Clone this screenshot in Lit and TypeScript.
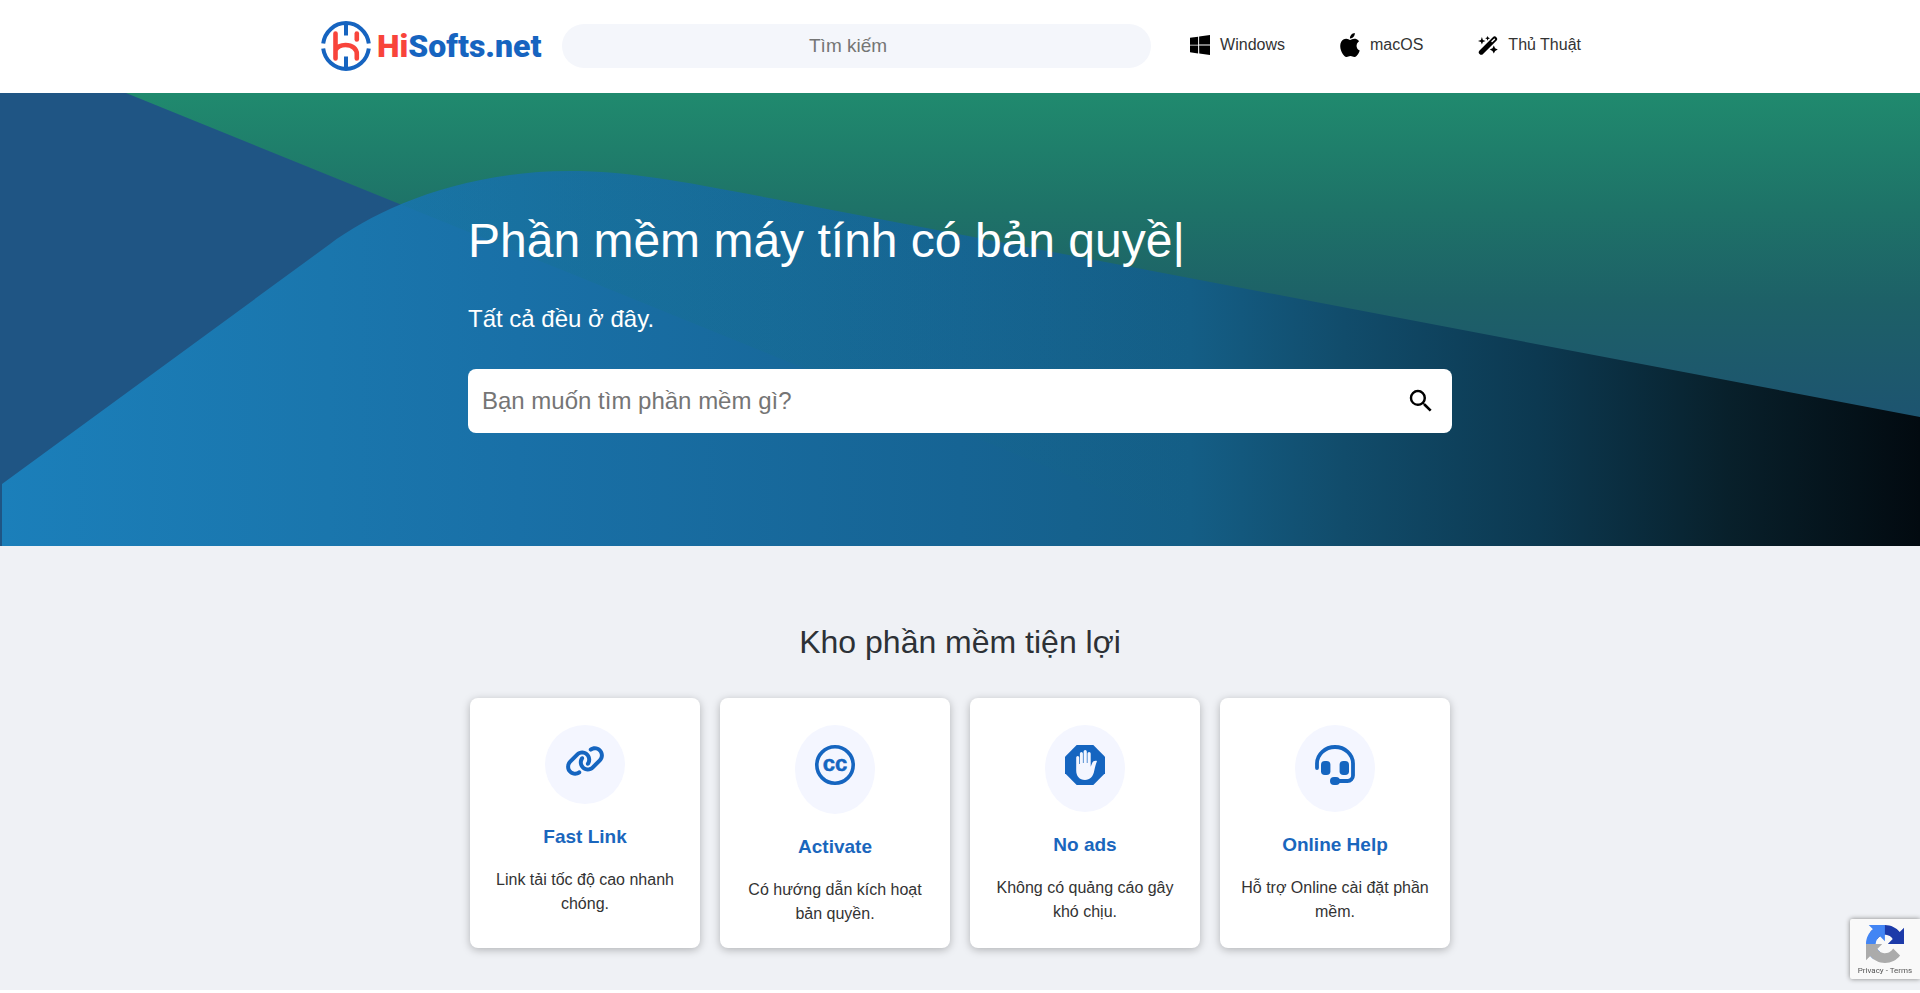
import { LitElement, html, css, svg } from "lit";
import { customElement, property } from "lit/decorators.js";

const windowsIcon = html`<svg viewBox="0 0 24 24" aria-hidden="true">
  <path d="M0 3.449 9.75 2.1v9.451H0m10.949-9.602L24 0v11.4H10.949M0 12.6h9.75v9.451L0 20.699M10.949 12.6H24V24l-12.9-1.801" />
</svg>`;

const appleIcon = html`<svg class="tall" viewBox="2 0 20 24" aria-hidden="true">
  <path d="M12.152 6.896c-.948 0-2.415-1.078-3.96-1.04-2.04.027-3.91 1.183-4.961 3.014-2.117 3.675-.546 9.103 1.519 12.09 1.013 1.454 2.208 3.09 3.792 3.039 1.52-.065 2.09-.987 3.935-.987 1.831 0 2.35.987 3.96.948 1.637-.026 2.676-1.48 3.676-2.948 1.156-1.688 1.636-3.325 1.662-3.415-.039-.013-3.182-1.221-3.22-4.857-.026-3.04 2.48-4.494 2.597-4.559-1.429-2.09-3.623-2.324-4.39-2.376-2-.156-3.675 1.09-4.61 1.09zM15.53 3.83c.843-1.012 1.4-2.427 1.245-3.83-1.207.052-2.662.805-3.532 1.818-.78.896-1.454 2.338-1.273 3.714 1.338.104 2.715-.688 3.559-1.701" />
</svg>`;

const wandIcon = html`<svg viewBox="0 0 20 20" aria-hidden="true">
  <path d="M3.3 17.2 16.6 3.9" stroke="#000" stroke-width="5" stroke-linecap="round" />
  <path d="M14 6.6 16.4 4.2" stroke="#fff" stroke-width="1.4" stroke-linecap="round" />
  <path d="M3.9 2 4.9 4.9 7.6 5.9 4.9 6.9 3.9 9.6 2.9 6.9 0 5.9 2.9 4.9zM9.6.9l.7 1.7 1.7.7-1.7.7-.7 1.7-.7-1.7-1.7-.7 1.7-.7zM15.8 10.6l1.3 2.7 2.7 1.3-2.7 1.3-1.3 2.7-1.3-2.7-2.7-1.3 2.7-1.3z" />
</svg>`;

const linkIcon = svg`<path transform="scale(0.0625)" d="M579.8 267.7c56.5-56.5 56.5-148 0-204.5c-50-50-128.8-56.5-186.3-15.4l-1.6 1.1c-14.4 10.3-17.7 30.3-7.4 44.6s30.3 17.7 44.6 7.4l1.6-1.1c32.1-22.9 76-19.3 103.8 8.6c31.5 31.5 31.5 82.5 0 114L422.3 334.8c-31.5 31.5-82.5 31.5-114 0c-27.9-27.9-31.5-71.8-8.6-103.8l1.1-1.6c10.3-14.4 6.9-34.4-7.4-44.6s-34.4-6.9-44.6 7.4l-1.1 1.6C206.5 251.2 213 330 263 380c56.5 56.5 148 56.5 204.5 0L579.8 267.7zM60.2 244.3c-56.5 56.5-56.5 148 0 204.5c50 50 128.8 56.5 186.3 15.4l1.6-1.1c14.4-10.3 17.7-30.3 7.4-44.6s-30.3-17.7-44.6-7.4l-1.6 1.1c-32.1 22.9-76 19.3-103.8-8.6C74 372 74 321 105.5 289.5L217.7 177.2c31.5-31.5 82.5-31.5 114 0c27.9 27.9 31.5 71.8 8.6 103.9l-1.1 1.6c-10.3 14.4-6.9 34.4 7.4 44.6s34.4 6.9 44.6-7.4l1.1-1.6C433.5 260.8 427 182 377 132c-56.5-56.5-148-56.5-204.5 0L60.2 244.3z" />`;

const ccIcon = svg`<circle cx="20" cy="20" r="18.2" fill="none" stroke="currentColor" stroke-width="3.6" />
  <text x="20" y="26" text-anchor="middle" font-size="22" font-weight="700" stroke="currentColor" stroke-width="0.5">cc</text>`;

const handIcon = svg`<path d="M11.7 0h16.6L40 11.7v16.6L28.3 40H11.7L0 28.3V11.7z" />
  <path fill="#f4f6ff" d="M11.2 12.6a1.5 1.5 0 0 1 3 0V19h.7V8.6a1.5 1.5 0 0 1 3 0V18h.7V6.6a1.6 1.6 0 0 1 3.2 0V18h.7V8.6a1.6 1.6 0 0 1 3.2 0V21.8l1.6-4c.6-1.5 2.3-2.3 4.7-1.8-.9 2.3-1.8 5.5-2.7 9.5C28.2 31.5 25 35 20 35c-5.6 0-8.8-4-8.8-9.5z" />`;

const headsetIcon = svg`<path d="M2 23v-4.5a18 16.5 0 0 1 36 0V30.5a5.5 5.5 0 0 1-5.5 5.500H20" fill="none" stroke="currentColor" stroke-width="3.8" stroke-linecap="round" />
  <rect x="6" y="16" width="9.4" height="14" rx="3.8" />
  <rect x="24.600" y="16" width="9.400" height="14" rx="3.800" />
  <rect x="15" y="32" width="10" height="8" rx="4" />`;

interface Feature {
  title: string;
  text: string;
  size: "small" | "medium" | "large";
  icon: unknown;
}

const features: Feature[] = [
  { title: "Fast Link", text: "Link tải tốc độ cao nhanh chóng.", size: "small", icon: linkIcon },
  { title: "Activate", text: "Có hướng dẫn kích hoạt bản quyền.", size: "large", icon: ccIcon },
  { title: "No ads", text: "Không có quảng cáo gây khó chịu.", size: "medium", icon: handIcon },
  { title: "Online Help", text: "Hỗ trợ Online cài đặt phần mềm.", size: "medium", icon: headsetIcon },
];

@customElement("site-header")
class SiteHeader extends LitElement {
  static styles = css`
    :host { display: block; background: #fff; }
    .bar {
      box-sizing: border-box;
      max-width: 1280px;
      min-height: 93px;
      margin: 0 auto;
      padding: 0 19px 2px 0;
      display: flex;
      align-items: center;
    }
    .logo {
      display: flex;
      align-items: center;
      gap: 6px;
      width: 221px;
      padding-left: 1px;
      margin-right: 20px;
      text-decoration: none;
      font: 900 32px/48px Roboto, "Open Sans", sans-serif;
      color: #1664c0;
    }
    .logo svg { width: 50px; height: 52px; flex: none; }
    .hi { color: #f8443b; }
    .search { flex: 1; display: flex; min-width: 0; }
    .search input {
      width: 100%;
      height: 44px;
      box-sizing: border-box;
      border: 0;
      border-radius: 22px;
      padding: 0;
      background: #f4f6fb;
      text-align: center;
      font: 19px/24px "Liberation Sans", Arial, sans-serif;
      color: #333;
    }
    .search input::placeholder { color: #757575; opacity: 1; }
    nav { display: flex; gap: 55px; margin-left: 39px; padding-bottom: 2px; }
    nav a {
      display: flex;
      align-items: center;
      gap: 10px;
      color: #333;
      text-decoration: none;
      font-size: 16px;
      line-height: 24px;
      white-space: nowrap;
    }
    nav svg { width: 20px; height: 20px; fill: #000; }
    nav svg.tall { height: 24px; }
  `;

  render() {
    return html`
      <header class="bar">
        <a class="logo" href="#">
          <svg viewBox="0 0 50 52" fill="none" aria-hidden="true">
            <g stroke="#1664c0" stroke-width="4">
              <path d="M2.2 23.5A23 23.5 0 0 1 47.8 23.5" />
              <path d="M2.2 28.5A23 23.5 0 0 0 47.8 28.5" />
              <path d="M25 2V15.5M25 36.5V50" />
            </g>
            <g stroke="#f8443b" stroke-width="4.6" stroke-linecap="round">
              <path d="M14.5 13.5V38.5M14.5 30C16.5 26.5 20 25 24.5 25C31.5 25 35.8 29 35.8 34V38.5" />
              <path d="M35.8 13.5V19.5" />
            </g>
          </svg>
          <span><span class="hi">Hi</span>Softs.net</span>
        </a>
        <form class="search" role="search">
          <input type="search" placeholder="Tìm kiếm" aria-label="Tìm kiếm" />
        </form>
        <nav>
          <a href="#">${windowsIcon}Windows</a>
          <a href="#">${appleIcon}macOS</a>
          <a href="#">${wandIcon}Thủ Thuật</a>
        </nav>
      </header>
    `;
  }
}

@customElement("hero-banner")
class HeroBanner extends LitElement {
  static styles = css`
    :host { display: grid; background: #1f5584; color: #fff; }
    .art, .content { grid-area: 1 / 1; }
    .art { width: 100%; height: 100%; min-height: 0; contain: size; }
    .content {
      z-index: 1;
      width: 100%;
      max-width: 984px;
      box-sizing: border-box;
      margin: 0 auto;
      padding: 119px 0 113px;
    }
    h1 { margin: 0 0 34px; font-size: 48px; line-height: 58px; font-weight: 400; }
    p { margin: 0 0 35px; font-size: 24px; line-height: 30px; }
    .search {
      display: flex;
      align-items: center;
      height: 64px;
      border-radius: 8px;
      background: #fff;
      overflow: hidden;
    }
    input {
      flex: 1;
      min-width: 0;
      height: 100%;
      box-sizing: border-box;
      border: 0;
      padding: 0 14px;
      background: none;
      font: 24px/30px "Liberation Sans", Arial, sans-serif;
      color: #333;
    }
    input::placeholder { color: #757575; opacity: 1; }
    button {
      display: grid;
      place-items: center;
      width: 62px;
      height: 64px;
      padding: 0;
      border: 0;
      background: none;
      cursor: pointer;
    }
    button svg { width: 30px; height: 30px; }
  `;

  render() {
    return html`
      <svg class="art" viewBox="0 0 1920 453" preserveAspectRatio="none" aria-hidden="true">
        <defs>
          <linearGradient id="green" gradientUnits="userSpaceOnUse" x1="0" y1="0" x2="0" y2="324">
            <stop offset="0" stop-color="#208a6e" />
            <stop offset="0.35" stop-color="#1e7368" />
            <stop offset="0.65" stop-color="#1d6067" />
            <stop offset="1" stop-color="#1d5470" />
          </linearGradient>
          <linearGradient id="blue" gradientUnits="userSpaceOnUse" x1="0" y1="0" x2="1920" y2="0">
            <stop offset="0" stop-color="#1b7fba" />
            <stop offset="0.17" stop-color="#1a76ad" />
            <stop offset="0.27" stop-color="#1970a7" />
            <stop offset="0.5" stop-color="#166494" />
            <stop offset="0.62" stop-color="#145e86" />
            <stop offset="0.7" stop-color="#114c6b" />
            <stop offset="0.8" stop-color="#0c3951" />
            <stop offset="0.9" stop-color="#08202b" />
            <stop offset="1" stop-color="#020a10" />
          </linearGradient>
          <linearGradient id="tint" gradientUnits="userSpaceOnUse" x1="402" y1="0" x2="1200" y2="0">
            <stop offset="0" stop-color="#13786f" stop-opacity="0.1" />
            <stop offset="0.25" stop-color="#13786f" stop-opacity="0.14" />
            <stop offset="0.6" stop-color="#13786f" stop-opacity="0.08" />
            <stop offset="1" stop-color="#13786f" stop-opacity="0" />
          </linearGradient>
        </defs>
        <path fill="url(#green)" d="M126 0H1920V453H1242z" />
        <path fill="url(#blue)" d="M2 391L330 151C375 117 460 78 570 78C632 78 690 90 790 109L1920 324V453H2z" />
        <path fill="url(#tint)" d="M402 112C450 88 510 78 570 78C632 78 690 90 790 109L1920 324V453H1242z" />
      </svg>
      <div class="content">
        <h1>Phần mềm máy tính có bản quyề|</h1>
        <p>Tất cả đều ở đây.</p>
        <form class="search" role="search">
          <input type="text" placeholder="Bạn muốn tìm phần mềm gì?" aria-label="Bạn muốn tìm phần mềm gì?" />
          <button type="button" aria-label="Tìm kiếm">
            <svg viewBox="0 0 24 24" aria-hidden="true">
              <path d="M15.5 14h-.79l-.28-.27A6.47 6.47 0 0 0 16 9.5 6.5 6.5 0 1 0 9.5 16c1.61 0 3.09-.59 4.23-1.57l.27.28v.79l5 4.99L20.49 19l-4.99-5zm-6 0C7.01 14 5 11.99 5 9.5S7.01 5 9.5 5 14 7.01 14 9.5 11.99 14 9.5 14z" />
            </svg>
          </button>
        </form>
      </div>
    `;
  }
}

@customElement("feature-card")
class FeatureCard extends LitElement {
  @property({ attribute: false }) feature!: Feature;

  static styles = css`
    :host {
      display: block;
      box-sizing: border-box;
      min-height: 250px;
      padding: 27px 16px 22px;
      border-radius: 8px;
      background: #fff;
      box-shadow: 0 2px 8px rgba(0, 0, 0, 0.26);
      text-align: center;
    }
    .badge {
      display: flex;
      justify-content: center;
      box-sizing: border-box;
      width: 80px;
      padding-top: 20px;
      margin: 0 auto;
      border-radius: 50%;
      background: #f4f6ff;
    }
    .small { height: 79px; }
    .medium { height: 87px; }
    .large { height: 89px; }
    svg { width: 40px; height: 40px; fill: currentColor; color: #1565c0; font-family: "Liberation Sans", Arial, sans-serif; }
    .small svg { height: 32px; }
    h3 { margin: 21px 0 19px; font-size: 19px; line-height: 24px; font-weight: 700; color: #1a66bd; }
    p { margin: 0; font-size: 16px; line-height: 24px; color: #333; }
  `;

  render() {
    const { title, text, size, icon } = this.feature;
    return html`
      <div class="badge ${size}">
        <svg viewBox=${size === "small" ? "0 0 40 32" : "0 0 40 40"} aria-hidden="true">${icon}</svg>
      </div>
      <h3>${title}</h3>
      <p>${text}</p>
    `;
  }
}

@customElement("recaptcha-badge")
class RecaptchaBadge extends LitElement {
  static styles = css`
    :host {
      position: fixed;
      right: 0;
      bottom: 14px;
      z-index: 2;
      box-sizing: border-box;
      width: 70px;
      height: 60px;
      padding-top: 6px;
      border-radius: 2px 0 0 2px;
      background: #f9f9f9;
      box-shadow: 0 0 5px gray;
      display: flex;
      flex-direction: column;
      align-items: center;
      font: 8px/10px Roboto, "Liberation Sans", sans-serif;
      color: #555;
    }
    svg { width: 38px; height: 38px; }
    a { color: #555; text-decoration: none; }
    div { margin-top: 3px; white-space: nowrap; }
  `;

  render() {
    return html`
      <svg viewBox="0 0 64 64" aria-hidden="true">
        <path fill="#1c3aa9" d="M64 31.955l-.033-1.37V4.687l-7.16 7.16C50.948 4.674 42.033.093 32.05.093c-10.4 0-19.622 4.96-25.458 12.64l11.736 11.86a15.55 15.55 0 0 1 4.754-5.334c2.05-1.6 4.952-2.906 8.968-2.906.485 0 .86.057 1.135.163 4.976.393 9.288 3.14 11.828 7.124l-8.307 8.307L64 31.953" />
        <path fill="#4285f4" d="M31.862.094l-1.37.033H4.594l7.16 7.16C4.58 13.147 0 22.06 0 32.046c0 10.4 4.96 19.622 12.64 25.458L24.5 45.768a15.55 15.55 0 0 1-5.334-4.754c-1.6-2.05-2.906-4.952-2.906-8.968 0-.485.057-.86.163-1.135.393-4.976 3.14-9.288 7.124-11.828l8.307 8.307L31.86.095" />
        <path fill="#ababab" d="M.001 32.045l.033 1.37v25.898l7.16-7.16c5.86 7.173 14.774 11.754 24.76 11.754 10.4 0 19.622-4.96 25.458-12.64l-11.736-11.86a15.55 15.55 0 0 1-4.754 5.334c-2.05 1.6-4.952 2.906-8.968 2.906-.485 0-.86-.057-1.135-.163-4.976-.393-9.288-3.14-11.828-7.124l8.307-8.307c-10.522.04-22.4.066-27.295-.005" />
      </svg>
      <div><a href="#">Privacy</a> - <a href="#">Terms</a></div>
    `;
  }
}

@customElement("app-root")
class AppRoot extends LitElement {
  static styles = css`
    :host {
      display: block;
      min-height: 100vh;
      background: #fff;
      font-family: "Liberation Sans", Arial, sans-serif;
      color: #333;
    }
    .features { background: #eff1f5; padding: 76px 0 42px; }
    h2 {
      margin: 0 0 36px;
      text-align: center;
      font-size: 32px;
      line-height: 40px;
      font-weight: 400;
      color: #2d3136;
    }
    .cards {
      max-width: 980px;
      margin: 0 auto;
      display: grid;
      grid-template-columns: repeat(4, 1fr);
      gap: 20px;
    }
  `;

  render() {
    return html`
      <site-header></site-header>
      <main>
        <hero-banner></hero-banner>
        <section class="features">
          <h2>Kho phần mềm tiện lợi</h2>
          <div class="cards">
            ${features.map((f) => html`<feature-card .feature=${f}></feature-card>`)}
          </div>
        </section>
      </main>
      <recaptcha-badge></recaptcha-badge>
    `;
  }
}
